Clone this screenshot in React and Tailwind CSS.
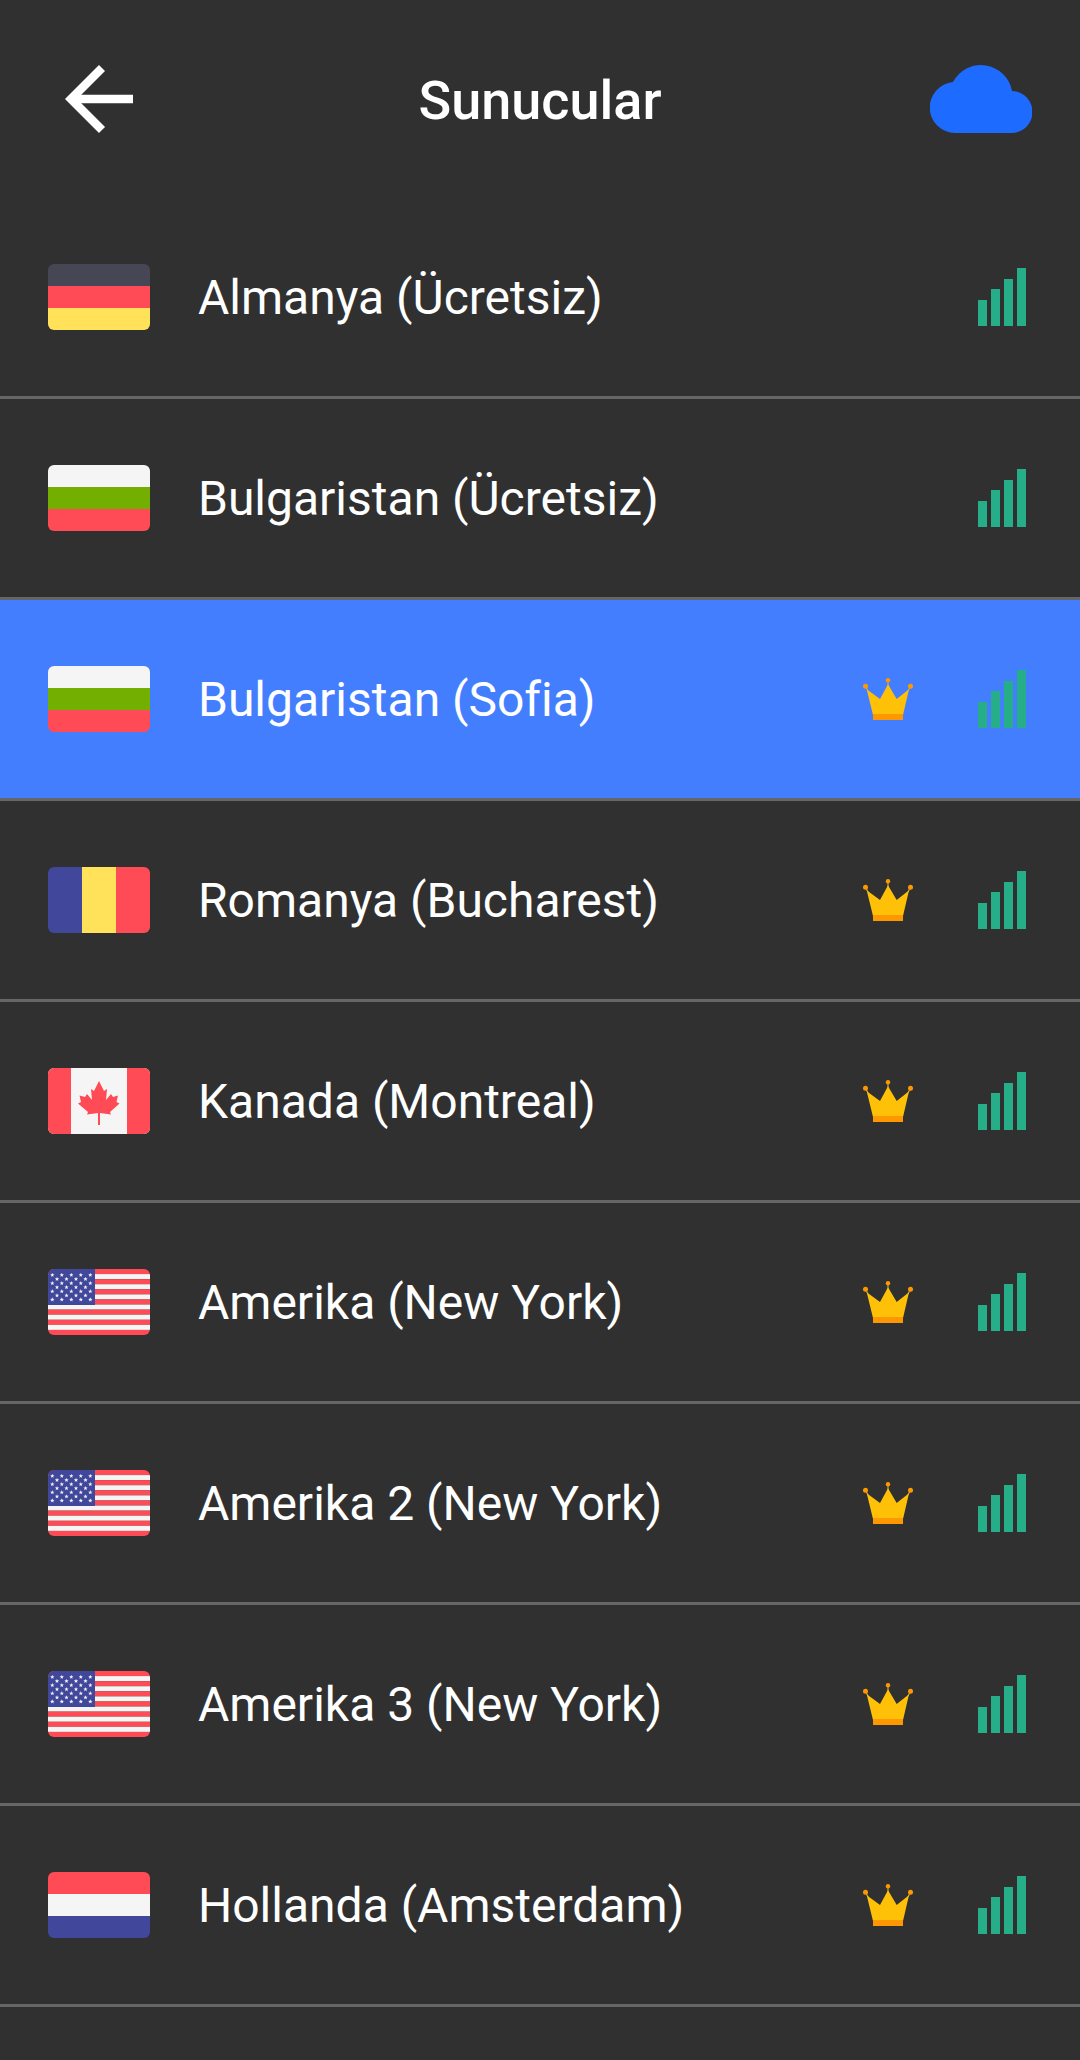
const RED = '#ff4b55'
const WHITE = '#f5f5f5'
const BLUE = '#41479b'

function Bands({ colors, vertical }) {
  const size = (vertical ? 102 : 66) / colors.length
  return colors.map((c, i) =>
    vertical ? (
      <rect key={i} x={i * size} y="0" width={size} height="66" fill={c} />
    ) : (
      <rect key={i} x="0" y={i * size} width="102" height={size} fill={c} />
    )
  )
}

function Star({ x, y }) {
  const pts = []
  for (let i = 0; i < 10; i++) {
    const r = i % 2 === 0 ? 2.3 : 0.95
    const a = (Math.PI / 5) * i - Math.PI / 2
    pts.push(`${x + r * Math.cos(a)},${y + r * Math.sin(a)}`)
  }
  return <polygon points={pts.join(' ')} fill={WHITE} />
}

function UsaFlag() {
  const stars = []
  for (let row = 0; row < 7; row++) {
    const odd = row % 2 === 1
    const n = odd ? 4 : 5
    for (let col = 0; col < n; col++) {
      stars.push(<Star key={`${row}-${col}`} x={(odd ? 9 : 4.3) + col * 9.5} y={6 + row * 4.1} />)
    }
  }
  return (
    <>
      <Bands colors={[RED, WHITE, RED, WHITE, RED, WHITE, RED, WHITE, RED, WHITE, RED, WHITE, RED]} />
      <rect x="0" y="0" width="47" height="36" fill={BLUE} />
      {stars}
    </>
  )
}

function CanadaFlag() {
  return (
    <>
      <rect x="0" y="0" width="102" height="66" fill={WHITE} />
      <rect x="0" y="0" width="23" height="66" fill={RED} />
      <rect x="79" y="0" width="23" height="66" fill={RED} />
      <polygon
        fill={RED}
        points="51,13 56,23 59,21 58,32 63,26 65,29 70,27.5 68.5,34 71.5,35.5 62,44 63,46.5 52,45 52,57 50,57 50,45 39,46.5 40,44 30,35.5 33,34 31.5,27.5 37,29 39,26 44,32 43,21 46,23"
      />
    </>
  )
}

const flags = {
  de: <Bands colors={['#464655', RED, '#ffe15a']} />,
  bg: <Bands colors={[WHITE, '#73af00', RED]} />,
  ro: <Bands vertical colors={[BLUE, '#ffe15a', RED]} />,
  ca: <CanadaFlag />,
  us: <UsaFlag />,
  nl: <Bands colors={[RED, WHITE, BLUE]} />,
}

function Flag({ code }) {
  return (
    <div className="h-[66px] w-[102px] shrink-0 overflow-hidden rounded-[6px]">
      <svg width="102" height="66" viewBox="0 0 102 66" className="block">
        {flags[code]}
      </svg>
    </div>
  )
}

function Crown() {
  return (
    <svg width="50" height="42" viewBox="0 0 50 42" className="shrink-0">
      <path d="M2.5 8.3 L5 13 M25 2 L25 8 M47.5 8.3 L45 13" stroke="#c9a24a" strokeWidth="1.2" />
      <polygon points="3.7,11.3 17,21 25,6.3 33.7,21 46,11.3 40,37 10,37" fill="#ffc107" />
      <rect x="10" y="36" width="30" height="6" fill="#ff9800" />
      <circle cx="2.5" cy="8.3" r="2.5" fill="#ff9800" />
      <circle cx="25" cy="2.2" r="2.2" fill="#ff9800" />
      <circle cx="47.5" cy="8.3" r="2.5" fill="#ff9800" />
    </svg>
  )
}

function Signal() {
  return (
    <svg width="48" height="58" viewBox="0 0 48 58" className="shrink-0">
      <rect x="0" y="32" width="9" height="26" fill="#26ae88" />
      <rect x="13" y="21" width="9" height="37" fill="#26ae88" />
      <rect x="26" y="11" width="9" height="47" fill="#26ae88" />
      <rect x="39" y="0" width="9" height="58" fill="#26ae88" />
    </svg>
  )
}

const servers = [
  { name: 'Almanya (Ücretsiz)', flag: 'de' },
  { name: 'Bulgaristan (Ücretsiz)', flag: 'bg' },
  { name: 'Bulgaristan (Sofia)', flag: 'bg', premium: true, active: true },
  { name: 'Romanya (Bucharest)', flag: 'ro', premium: true },
  { name: 'Kanada (Montreal)', flag: 'ca', premium: true },
  { name: 'Amerika (New York)', flag: 'us', premium: true },
  { name: 'Amerika 2 (New York)', flag: 'us', premium: true },
  { name: 'Amerika 3 (New York)', flag: 'us', premium: true },
  { name: 'Hollanda (Amsterdam)', flag: 'nl', premium: true },
]

export default function App() {
  return (
    <div className="h-[2060px] w-[1080px] overflow-hidden bg-[#303030] font-['Roboto',sans-serif] text-white [font-variant-ligatures:none]">
      <header className="flex h-[198px] items-center justify-between px-[48px]">
        <button type="button" className="flex w-[102px] justify-center">
          <svg width="68" height="68" viewBox="0 0 68 68" fill="none" stroke="#fff" strokeWidth="8.5">
            <path d="M37 3 L6 34 L37 65" />
            <path d="M6 34 L68 34" />
          </svg>
        </button>
        <h1 className="mt-[3px] text-[54px] leading-none font-medium">Sunucular</h1>
        <svg width="102" height="68" viewBox="0 0 102 68" className="shrink-0">
          <path d="M25 68 A25.5 25.5 0 0 1 23 17.1 A31.5 31.5 0 0 1 82 26 A21 21 0 0 1 81 68 Z" fill="#1e6bff" />
        </svg>
      </header>

      <ul>
        {servers.map((s) => (
          <li
            key={s.name}
            className={
              s.active
                ? 'flex h-[201px] items-center border-b-[3px] border-[#666666] bg-[#437eff] pr-[54px] pl-[48px]'
                : 'flex h-[201px] items-center border-b-[3px] border-[#666666] pr-[54px] pl-[48px]'
            }
          >
            <Flag code={s.flag} />
            <span className="mt-[2px] ml-[48px] flex-1 text-[48px] leading-none">{s.name}</span>
            {s.premium && <Crown />}
            <div className="ml-[65px]">
              <Signal />
            </div>
          </li>
        ))}
      </ul>
    </div>
  )
}
